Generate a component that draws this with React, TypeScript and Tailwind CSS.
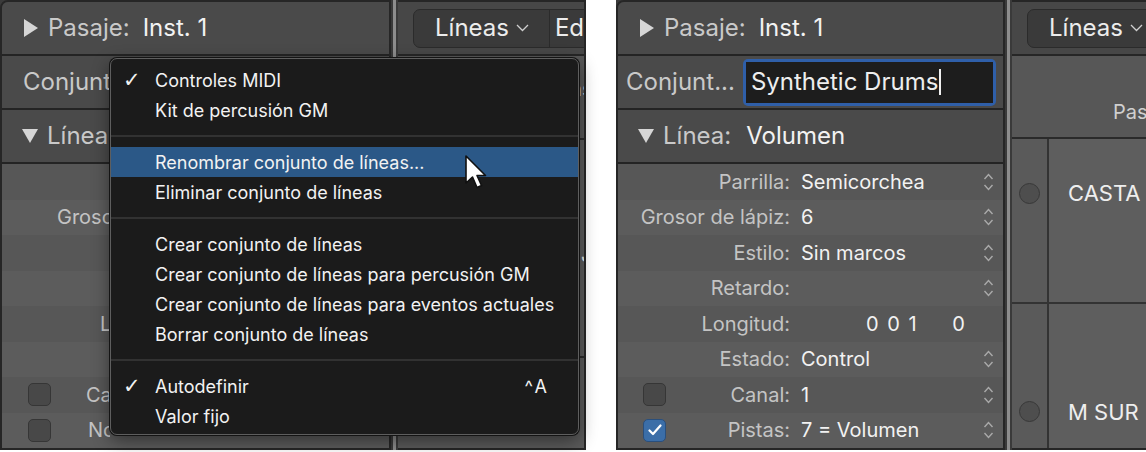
import React from "react";

const RightTri = () => (
  <svg width="14" height="18" viewBox="0 0 14 18" className="shrink-0">
    <polygon points="0,0 14,9 0,18" fill="#d6d6d6" />
  </svg>
);

const DownTri = () => (
  <svg width="16" height="14" viewBox="0 0 16 14" className="shrink-0">
    <polygon points="0,0 16,0 8,14" fill="#d6d6d6" />
  </svg>
);

const Stepper = () => (
  <svg width="11" height="20" viewBox="0 0 11 20" className="shrink-0">
    <path d="M1.5 7 L5.5 2.5 L9.5 7" fill="none" stroke="#a9a9a9" strokeWidth="1.4" />
    <path d="M1.5 13 L5.5 17.5 L9.5 13" fill="none" stroke="#a9a9a9" strokeWidth="1.4" />
  </svg>
);

const Chevron = () => (
  <svg width="13" height="8" viewBox="0 0 13 8" className="shrink-0">
    <path d="M1 1 L6.5 6.5 L12 1" fill="none" stroke="#cfcfcf" strokeWidth="1.3" />
  </svg>
);

const Checkbox = ({ checked }: { checked: boolean }) =>
  checked ? (
    <div className="w-[23px] h-[23px] rounded-[5px] bg-[#3b6ea8] border border-[#2a4f7c] flex items-center justify-center">
      <svg width="14" height="12" viewBox="0 0 14 12">
        <path d="M1.5 6.5 L5 10 L12.5 1.5" fill="none" stroke="#ffffff" strokeWidth="2.2" strokeLinecap="round" strokeLinejoin="round" />
      </svg>
    </div>
  ) : (
    <div className="w-[23px] h-[23px] rounded-[5px] bg-[#484848] border border-[#363636]" />
  );

const Divider = () => (
  <div className="w-[7px] shrink-0 bg-[#3a3a3a] flex justify-center">
    <div className="w-[3px] bg-[#8d8d8d]" />
  </div>
);

type Row = {
  label: string;
  value?: React.ReactNode;
  stepper?: boolean;
  check?: "on" | "off";
  indent?: string;
};

const rightRows: Row[] = [
  { label: "Parrilla:", value: "Semicorchea", stepper: true },
  { label: "Grosor de lápiz:", value: "6", stepper: true },
  { label: "Estilo:", value: "Sin marcos", stepper: true },
  { label: "Retardo:", value: "", stepper: true },
  {
    label: "Longitud:",
    value: (
      <span className="flex">
        <span className="ml-[65px] tracking-[1.5px]">0 0 1</span>
        <span className="ml-[34px]">0</span>
      </span>
    ),
  },
  { label: "Estado:", value: "Control", stepper: true },
  { label: "Canal:", value: "1", stepper: true, check: "off" },
  { label: "Pistas:", value: "7 = Volumen", stepper: true, check: "on" },
];

const leftRows: Row[] = [
  { label: "" },
  { label: "Grosor de lápiz:", indent: "pl-[55px]" },
  { label: "" },
  { label: "" },
  { label: "Longitud:", indent: "pl-[98px]" },
  { label: "" },
  { label: "Canal:", indent: "pl-[35px]", check: "off" },
  { label: "Nota:", indent: "pl-[37px]", check: "off" },
];

const HeaderRow = ({ children }: { children: React.ReactNode }) => (
  <div className="h-[54px] shrink-0 bg-[#4a4a4a] border-b-2 border-[#242424] flex items-center text-[24px] whitespace-nowrap overflow-hidden">
    {children}
  </div>
);

const RightInspector = () => (
  <div className="w-[389px] shrink-0 flex flex-col border-2 border-[#262626] rounded-tl-[8px] overflow-hidden">
    <HeaderRow>
      <div className="ml-[22px] mr-[10px]"><RightTri /></div>
      <span className="text-[#c9c9c9]">Pasaje:</span>
      <span className="ml-[13px] text-[#f2f2f2]">Inst. 1</span>
    </HeaderRow>
    <HeaderRow>
      <span className="ml-[8px] text-[#c9c9c9]">Conjunt...</span>
      <div className="ml-[8px] w-[253px] h-[47px] shrink-0 rounded-[5px] bg-[#2f5fa9] p-[3px]">
        <div className="h-full bg-[#1d1d1d] flex items-center pl-[5px] text-[#eeeeee]">
          Synthetic Drums
          <span className="w-[2px] h-[26px] bg-[#f0f0f0] ml-[1px]" />
        </div>
      </div>
    </HeaderRow>
    <HeaderRow>
      <div className="ml-[20px] mr-[9px]"><DownTri /></div>
      <span className="text-[#c9c9c9]">Línea:</span>
      <span className="ml-[15px] text-[#f2f2f2]">Volumen</span>
    </HeaderRow>
    <div className="flex-1 flex flex-col text-[20px]">
      {rightRows.map((r, i) => (
        <div
          key={r.label}
          className={`h-[35.5px] flex items-center ${i % 2 === 0 ? "bg-[#575757]" : "bg-[#5c5c5c]"}`}
        >
          <div className="w-[172px] shrink-0 flex items-center justify-end">
            {r.check && (
              <div className="ml-[25px] mr-auto">
                <Checkbox checked={r.check === "on"} />
              </div>
            )}
            <span className="shrink-0 whitespace-nowrap text-[#c4c4c4]">{r.label}</span>
          </div>
          <div className="flex-1 ml-[11px] text-[#f2f2f2] whitespace-nowrap">{r.value}</div>
          <div className="w-[11px] mr-[9px]">{r.stepper && <Stepper />}</div>
        </div>
      ))}
    </div>
  </div>
);

// left copy: everything right of x=110 sits under the open menu
const LeftInspector = () => (
  <div className="w-[391px] shrink-0 flex flex-col border-2 border-[#262626] rounded-tl-[8px] overflow-hidden">
    <HeaderRow>
      <div className="ml-[22px] mr-[10px]"><RightTri /></div>
      <span className="text-[#c9c9c9]">Pasaje:</span>
      <span className="ml-[13px] text-[#f2f2f2]">Inst. 1</span>
    </HeaderRow>
    <HeaderRow>
      <div className="ml-[21px] w-[86px] overflow-hidden">
        <span className="text-[#c9c9c9]">Conjunto</span>
      </div>
    </HeaderRow>
    <HeaderRow>
      <div className="ml-[20px] mr-[9px]"><DownTri /></div>
      <div className="w-[61px] overflow-hidden">
        <span className="text-[#c9c9c9]">Línea</span>
      </div>
    </HeaderRow>
    <div className="flex-1 flex flex-col text-[20px]">
      {leftRows.map((r, i) => (
        <div
          key={i}
          className={`h-[35.5px] flex items-center ${i % 2 === 0 ? "bg-[#575757]" : "bg-[#5c5c5c]"}`}
        >
          <div className="w-[108px] flex items-center overflow-hidden">
            {r.check && (
              <div className="ml-[26px] shrink-0">
                <Checkbox checked={r.check === "on"} />
              </div>
            )}
            <span className={`${r.indent ?? ""} text-[#c4c4c4] whitespace-nowrap`}>{r.label}</span>
          </div>
        </div>
      ))}
    </div>
  </div>
);

const Toolbar = ({ second }: { second?: boolean }) => (
  <div className="h-[54px] shrink-0 bg-[#474747] border-b-2 border-[#262626] flex items-center pl-[15px] overflow-hidden">
    <div className="h-[39px] shrink-0 flex items-center bg-[#3a3a3a] border border-[#2b2b2b] rounded-[7px] text-[24px] text-[#ececec] whitespace-nowrap">
      <div className="flex items-center gap-[7px] pl-[21px] pr-[20px] h-full">
        Líneas <Chevron />
      </div>
      {second && <div className="h-full border-l border-[#2b2b2b] pl-[5px] pr-[20px] flex items-center">Edición</div>}
    </div>
  </div>
);

const Menu = () => {
  const Item = ({ text, check, shortcut, active }: { text: string; check?: boolean; shortcut?: string; active?: boolean }) => (
    <div className={`h-[30px] flex items-center ${active ? "bg-[#2b5887]" : ""}`}>
      <span className="w-[44px] pl-[12px] text-[21px] leading-none text-[#f2f2f2] font-['DejaVu_Sans',sans-serif]">
        {check ? "✓" : ""}
      </span>
      <span className="flex-1 text-[#f2f2f2]">{text}</span>
      {shortcut && <span className="mr-[28px] text-[#f2f2f2] tracking-[3px]">{shortcut}</span>}
    </div>
  );
  const Sep = () => (
    <div className="h-[22px] flex items-center">
      <div className="h-[2px] w-full bg-[#323232]" />
    </div>
  );
  return (
    <div className="absolute left-[110px] top-[58px] w-[469px] h-[377px] z-10 rounded-[7px] bg-[#1b1b1b] border border-[#5e5e5e] shadow-[0_0_0_1px_#141414,0_6px_18px_rgba(0,0,0,0.45)] pt-[6px] text-[18px] whitespace-nowrap overflow-hidden">
      <Item text="Controles MIDI" check />
      <Item text="Kit de percusión GM" />
      <Sep />
      <Item text="Renombrar conjunto de líneas..." active />
      <Item text="Eliminar conjunto de líneas" />
      <Sep />
      <Item text="Crear conjunto de líneas" />
      <Item text="Crear conjunto de líneas para percusión GM" />
      <Item text="Crear conjunto de líneas para eventos actuales" />
      <Item text="Borrar conjunto de líneas" />
      <Sep />
      <Item text="Autodefinir" check shortcut="^A" />
      <Item text="Valor fijo" />
    </div>
  );
};

const Cursor = () => (
  <svg className="absolute left-[463px] top-[154px] z-20" width="26" height="38" viewBox="0 0 26 38">
    <path
      d="M3 2 L3 29 L9.5 23 L14 33.5 L18.5 31.5 L14 21.5 L22.5 21.5 Z"
      fill="#ffffff"
      stroke="#111111"
      strokeWidth="1.6"
      strokeLinejoin="round"
    />
  </svg>
);

export default function App() {
  return (
    <div className="w-[1146px] h-[452px] bg-white flex font-['Inter',sans-serif] overflow-hidden">
      {/* left screenshot: menu open */}
      <div className="relative w-[586px] h-[450px] shrink-0 flex bg-[#3a3a3a]">
        <LeftInspector />
        <Divider />
        <div className="flex-1 flex flex-col border-2 border-l-0 border-[#262626] overflow-hidden">
          <Toolbar second />
          <div className="h-[84px] shrink-0 bg-[#575757] border-b-2 border-[#2a2a2a] text-[20px] text-[#d0d0d0] pl-[160px] pt-[18px]">
            Pas
          </div>
          <div className="h-[218px] shrink-0 bg-[#5b5b5b] border-b-2 border-[#2a2a2a] text-[20px] text-[#e8e8e8] pl-[183px] pt-[100px]">
            J
          </div>
          <div className="flex-1 bg-[#5b5b5b]" />
        </div>
        <Menu />
        <Cursor />
      </div>

      <div className="w-[30px] shrink-0" />

      {/* right screenshot: renaming */}
      <div className="w-[530px] h-[450px] shrink-0 flex bg-[#3a3a3a]">
        <RightInspector />
        <Divider />
        <div className="flex-1 flex flex-col border-t-2 border-b-2 border-[#262626] overflow-hidden">
          <Toolbar />
          <div className="h-[83px] shrink-0 bg-[#575757] border-b-2 border-[#2a2a2a] flex items-end pb-[10px] pl-[101px] text-[20px] text-[#cfcfcf] whitespace-nowrap">
            Pasaje
          </div>
          <div className="flex-1 flex flex-col">
            {["CASTA", "M SUR"].map((t, i) => (
              <div
                key={t}
                className={`flex ${i === 0 ? "h-[165px] border-b-2 border-[#333333]" : "flex-1"}`}
              >
                <div className="w-[37px] shrink-0 bg-[#5a5a5a] border-r-2 border-[#333333] flex justify-center">
                  <div className={`w-[21px] h-[21px] rounded-full bg-[#4e4e4e] border border-[#383838] ${i === 0 ? "mt-[44px]" : "mt-[97px]"}`} />
                </div>
                <div className={`flex-1 bg-[#5e5e5e] pl-[19px] text-[22px] text-[#eeeeee] whitespace-nowrap ${i === 0 ? "pt-[38px]" : "pt-[92px]"}`}>
                  {t}
                </div>
              </div>
            ))}
          </div>
        </div>
      </div>
    </div>
  );
}
